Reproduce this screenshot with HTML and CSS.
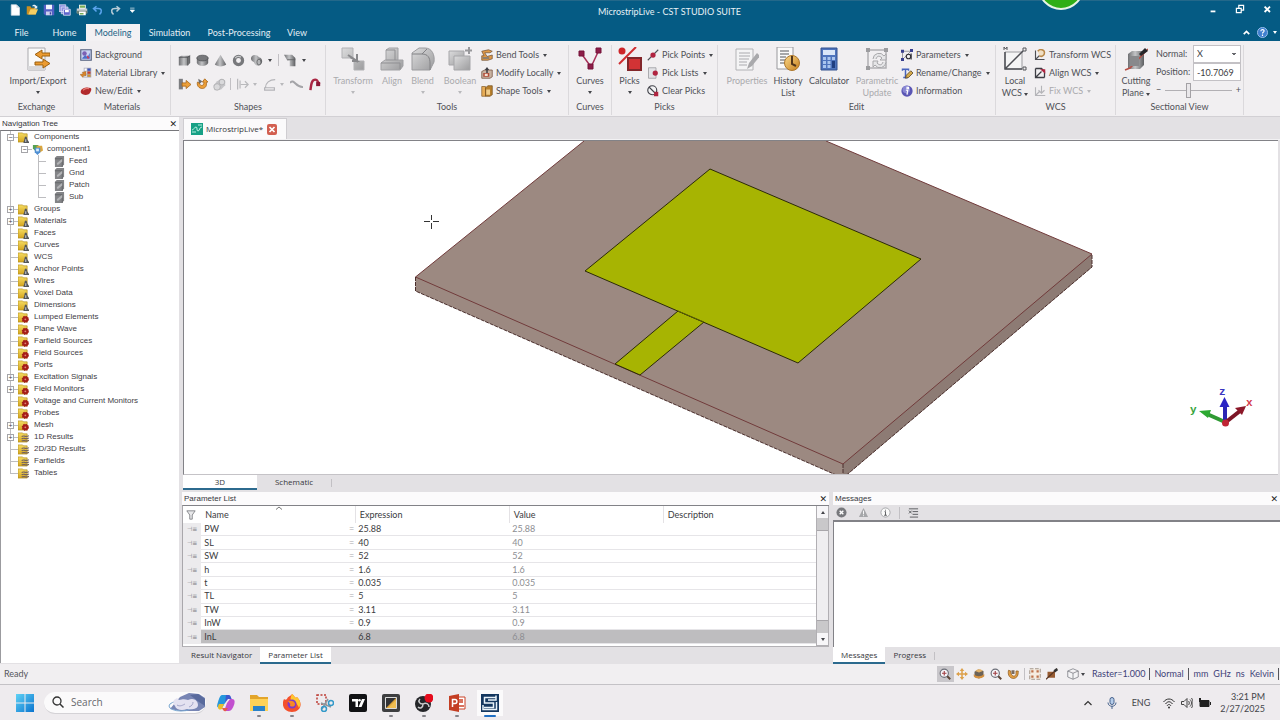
FILE: index.html
```html
<!DOCTYPE html>
<html lang="en">
<head>
<meta charset="utf-8">
<title>MicrostripLive - CST STUDIO SUITE</title>
<link rel="stylesheet" href="styles.css">
</head>
<body>
<svg class="defs" aria-hidden="true">
  <defs>
    <linearGradient id="metal" x1="0" x2="1"><stop offset="0" stop-color="#6f7073"/><stop offset=".45" stop-color="#c3c4c6"/><stop offset="1" stop-color="#5d5e61"/></linearGradient>
    <linearGradient id="pale" x1="0" y1="0" x2="1" y2="1"><stop offset="0" stop-color="#dcdcdd"/><stop offset="1" stop-color="#9c9c9e"/></linearGradient>
    <linearGradient id="win" x1="0" y1="0" x2="1" y2="1"><stop offset="0" stop-color="#5fd2f5"/><stop offset="1" stop-color="#0a74cf"/></linearGradient>
    <linearGradient id="gold" x1="0" y1="0" x2="1" y2="1"><stop offset="0" stop-color="#fbd98a"/><stop offset="1" stop-color="#c67f1d"/></linearGradient>
    <linearGradient id="fold" x1="0" y1="0" x2="0" y2="1"><stop offset="0" stop-color="#f5dc62"/><stop offset="1" stop-color="#d5a51e"/></linearGradient>
    <symbol id="i-new" viewBox="0 0 16 16"><path d="M3 1h7l4 4v10H3z" fill="#fff" stroke="#d8dfe6"/><path d="M10 1v4h4" fill="#cfd6dd"/></symbol>
    <symbol id="i-open" viewBox="0 0 16 16"><path d="M1 3h5l1 2h6v9H1z" fill="#c98f22"/><path d="M3 14l3-7h10l-3 7z" fill="#f7cf62"/><path d="M8 3c2-3 5-2 6 0l1-1v4h-4l1-2c-1-1-2-1-4-1z" fill="#e7eef5"/></symbol>
    <symbol id="i-save" viewBox="0 0 16 16"><path d="M1 1h14v14H3l-2-2z" fill="#5560c5"/><path d="M4 1h8v6H4z" fill="#f3f4fb"/><path d="M4 10h8v5H4z" fill="#cdd1ee"/><path d="M9 11h2v3H9z" fill="#39409a"/></symbol>
    <symbol id="i-saveall" viewBox="0 0 16 16"><path d="M0 1h9v9H0zM3 4h9v9H3z" fill="#8d90de" stroke="#dfe1f8"/><path d="M6 7h9v8H6z" fill="#5f65cb" stroke="#e7e8fb"/><path d="M8 8h5v3H8z" fill="#fff"/></symbol>
    <symbol id="i-print" viewBox="0 0 16 16"><path d="M4 1h9v6H4z" fill="#fff"/><path d="M1 6h14v6H1z" fill="#c8cdd1"/><path d="M1 9h14v4H1z" fill="#6b7f76"/><path d="M4 10h9v5H4z" fill="#fff"/><path d="M5 2h7v3H5zM5 12h5v2H5z" fill="#78ad58"/></symbol>
    <symbol id="i-undo" viewBox="0 0 16 16"><path d="M6 3L2 6l4 4M3 6h5c5 0 6 4 2 8" fill="none" stroke="#5aa3ec" stroke-width="2"/></symbol>
    <symbol id="i-redo" viewBox="0 0 16 16"><path d="M10 3l4 3-4 4M13 6H8c-5 0-6 4-2 8" fill="none" stroke="#b9cdd8" stroke-width="2"/></symbol>
    <symbol id="i-import" viewBox="0 0 24 24"><path d="M2 1h17v22H2z" fill="#fafafa" stroke="#a9a9ad"/><path d="M2 19h17v4H2z" fill="#d9d9dc"/><path d="M24 6v3h-8v3l-7-4.500L16 3v3zM9 15v3h8v3l7-4.500L17 12v3z" fill="#eb9b31" stroke="#9b6011"/></symbol>
    <symbol id="i-bg" viewBox="0 0 16 16"><path d="M1 1h14v14H1z" fill="#c9d3f3" stroke="#54607c" stroke-width="1.5"/><circle cx="6" cy="6" r="3" fill="#7b61b4"/><path d="M3 12l4-4 3 3 3-6v8H3z" fill="#4c6fc8"/><path d="M9 8l4 4-3 1z" fill="#d6364d"/></symbol>
    <symbol id="i-lib" viewBox="0 0 16 16"><path d="M5 1h10v13H5z" fill="#a5a7b8"/><path d="M6 2h3v3H6zM6 6h3v3H6zM6 10h3v3H6z" fill="#fff"/><path d="M10 2h4v3h-4z" fill="#3d54bb"/><path d="M10 6h4v3h-4z" fill="#c63e2b"/><path d="M10 10h4v3h-4z" fill="#d3912c"/><path d="M8 6v6l-3-1-1 3-4-4 4-1-1-2z" fill="#d9852a" stroke="#8a5a20" stroke-width=".5"/></symbol>
    <symbol id="i-mat" viewBox="0 0 16 16"><path d="M1 8c1-4 8-6 13-4 2 1 1 4-1 7-3 4-11 2-12-1z" fill="#b22a2c"/><path d="M4 7c2-2 5-3 8-2" stroke="#e67b74" stroke-width="1.5" fill="none"/></symbol>
    <symbol id="i-box" viewBox="0 0 16 16"><path d="M1 4l3-2h11v9l-3 3H1z" fill="url(#metal)"/><path d="M1 4h11v10M12 4l3-2" stroke="#4c4d50" fill="none"/></symbol>
    <symbol id="i-cyl" viewBox="0 0 16 16"><path d="M1 5v6c2 5 12 5 14 0V5z" fill="url(#metal)"/><ellipse cx="8" cy="5" rx="7" ry="3.5" fill="#77787b" stroke="#535457"/></symbol>
    <symbol id="i-cone" viewBox="0 0 16 16"><path d="M8 1l7 12c-3 3-11 3-14 0z" fill="url(#metal)"/></symbol>
    <symbol id="i-torus" viewBox="0 0 16 16"><circle cx="8" cy="8" r="5" fill="none" stroke="#77787b" stroke-width="4"/><path d="M4 5c2-3 6-2 7-1" stroke="#c8c9cb" stroke-width="1.5" fill="none"/></symbol>
    <symbol id="i-pill" viewBox="0 0 16 16"><path d="M2 3c3-3 7-2 9 1 4 1 5 5 3 8-3 4-8 2-9-2C2 9 0 6 2 3z" fill="url(#metal)"/><ellipse cx="11" cy="10" rx="2.500" ry="3.500" fill="#b4b5b7" stroke="#606164"/></symbol>
    <symbol id="i-bend" viewBox="0 0 16 16"><path d="M0 1h10l4 4v10H7V8H4z" fill="url(#metal)"/><path d="M4 7h10" stroke="#606164" fill="none"/></symbol>
    <symbol id="i-extr" viewBox="0 0 16 16"><path d="M1 1h5v13H1z" fill="#7c7d80"/><path d="M5 6h5V3l6 5-6 5v-3H5z" fill="#eda03a" stroke="#a8661a"/></symbol>
    <symbol id="i-rot" viewBox="0 0 16 16"><path d="M4 1l5 3-4 4z" fill="#6e6f72"/><path d="M3 5c-2 8 9 11 11 4V5l2 0-4-4-3 4h2c0 6-5 5-6 1z" fill="#eda03a" stroke="#a8661a"/></symbol>
    <symbol id="i-loft" viewBox="0 0 16 16"><path d="M5 4l5-3 5 2v6l-5 5-8 1-1-6z" fill="#c5c5c8"/><circle cx="5" cy="11" r="4" fill="#d9d9db" stroke="#ababae"/><circle cx="11" cy="5" r="3.500" fill="#d9d9db" stroke="#ababae"/></symbol>
    <symbol id="i-wire" viewBox="0 0 16 16"><path d="M2 1v13M5 3v10M6 8h9M11 4l4 4-4 4" fill="none" stroke="#b9b9bc" stroke-width="1.500"/></symbol>
    <symbol id="i-arc" viewBox="0 0 16 16"><path d="M3 12C3 6 8 2 15 2M2 12h12v3H2z" fill="none" stroke="#b4b4b8" stroke-width="1.500"/></symbol>
    <symbol id="i-wave" viewBox="0 0 16 16"><path d="M0 6c5-6 7 6 16 5" fill="none" stroke="#a4a4a8" stroke-width="2.500"/></symbol>
    <symbol id="i-hook" viewBox="0 0 16 16"><path d="M3 15C4 6 5 2 9 2c3 0 3 3 5 6" fill="none" stroke="#aa2643" stroke-width="3"/><path d="M10 5h5v5h-5z" fill="#8c1836"/></symbol>
    <symbol id="i-trans" viewBox="0 0 24 24"><path d="M1 1h11v10H1zM13 14h10v9H13z" fill="url(#pale)" stroke="#b1b1b4"/><path d="M7 8l9 6h-5M16 14V7M9 10l8 5" stroke="#88888b" stroke-width="2" fill="none"/></symbol>
    <symbol id="i-align" viewBox="0 0 24 24"><path d="M6 3l3-2h9v12H6zM1 16l4-3h18v6l-3 4H1z" fill="url(#pale)" stroke="#a1a1a4"/><path d="M6 3h9v10M1 16h19v6" fill="none" stroke="#8f8f92"/></symbol>
    <symbol id="i-blend" viewBox="0 0 24 24"><path d="M1 6l7-5h6c7 0 10 7 9 14l-4 8H1z" fill="url(#pale)" stroke="#9b9b9e"/><path d="M1 7h10c6 0 8 4 8 9v7M11 7l5-5" fill="none" stroke="#828285"/></symbol>
    <symbol id="i-bool" viewBox="0 0 24 24"><path d="M1 4h15v14H1z" fill="url(#pale)" stroke="#a6a6a9"/><path d="M6 9h16v14H6z" fill="url(#pale)" stroke="#a6a6a9"/><path d="M21 0v7M17 3.500h7" stroke="#98989b" stroke-width="2"/></symbol>
    <symbol id="i-bt" viewBox="0 0 16 16"><path d="M1 3l9-2 5 2-3 2H5l3 5 7-2v5l-6 2H1V9l3 0z" fill="#e09a47" stroke="#73543a"/><path d="M2 12h9" stroke="#76777a" stroke-width="2"/></symbol>
    <symbol id="i-ml" viewBox="0 0 16 16"><path d="M1 6l4-2h10v9l-3 2H1z" fill="#c9b3a2" stroke="#724f3c"/><path d="M8 0l3 4H5zM7 3h2v6H7z" fill="#3c3d43"/><path d="M3 8h8v5H3z" fill="#b04b37"/><path d="M5 9h4v3H5z" fill="#f4e2d4"/></symbol>
    <symbol id="i-st" viewBox="0 0 16 16"><path d="M1 2h5v13H1z" fill="#e7ac55" stroke="#8a6330"/><path d="M6 4l3-3h6v12l-3 2H6z" fill="#b8802c" stroke="#795221"/><path d="M7 6h5v7H7z" fill="#f0cd8c"/></symbol>
    <symbol id="i-curves" viewBox="0 0 24 24"><path d="M3 6l10 14 8-17" stroke="#a63058" stroke-width="1.500" fill="none"/><path d="M1 4h5v5H1zM18 1h5v5h-5zM10 17h5v5h-5z" fill="#8d1d49" stroke="#741339"/></symbol>
    <symbol id="i-picks" viewBox="0 0 24 24"><path d="M1 17L18 0" stroke="#cf2c30" stroke-width="2"/><circle cx="4" cy="4" r="3.500" fill="#cc2529"/><path d="M10 11h13v12H10z" fill="#d23335" stroke="#82262a" stroke-width="2"/></symbol>
    <symbol id="i-pp" viewBox="0 0 16 16"><path d="M1 15L15 1" stroke="#505158" stroke-width="1.500"/><circle cx="8" cy="8" r="3.500" fill="#b02440"/></symbol>
    <symbol id="i-pl" viewBox="0 0 16 16"><path d="M2 1h10v14H2z" fill="#e2e2e6" stroke="#95959b"/><circle cx="11" cy="8" r="3.500" fill="#b02440"/></symbol>
    <symbol id="i-cp" viewBox="0 0 16 16"><circle cx="7" cy="7" r="6" fill="#f2f2f4" stroke="#404148" stroke-width="1.500"/><path d="M3 3l10 10" stroke="#404148" stroke-width="1.500"/><path d="M10 9h5v6h-6z" fill="#b02440"/></symbol>
    <symbol id="i-prop" viewBox="0 0 24 24"><path d="M1 2h17v21H1z" fill="#f4f4f5" stroke="#b2b2b5"/><path d="M4 6h11M4 9h11M4 12h10M4 15h8M4 18h8" stroke="#aaaaae"/><path d="M12 22l2-6 8-10 3 3-8 10z" fill="#a9a9ac"/></symbol>
    <symbol id="i-hist" viewBox="0 0 24 24"><path d="M1 0h16v22H1z" fill="#fafafa" stroke="#98989c"/><path d="M4 4h9M4 7h9M4 10h6M4 13h5M4 16h5" stroke="#55565b"/><circle cx="16" cy="16" r="7.500" fill="url(#gold)" stroke="#ad772b"/><path d="M16 9v8l4 2" stroke="#51351a" stroke-width="2" fill="none"/></symbol>
    <symbol id="i-calc" viewBox="0 0 24 24"><path d="M4 1h16v22H4z" fill="#4e74bd" stroke="#34538f"/><path d="M6 3h12v5H6z" fill="#d9e6f8"/><path d="M6 10h3v3H6zM10.500 10h3v3h-3zM15 10h3v3h-3zM6 14h3v3H6zM10.500 14h3v3h-3zM15 14h3v3h-3zM6 18h3v3H6zM10.500 18h3v3h-3z" fill="#a9c5ee"/><path d="M15 14h3v7h-3z" fill="#203f80"/></symbol>
    <symbol id="i-param" viewBox="0 0 24 24"><path d="M3 3h18v18H3z" fill="none" stroke="#b0b0b3" stroke-width="1.500"/><path d="M1 1h4v4H1zM19 1h4v4h-4zM1 19h4v4H1z" fill="#9c9c9f"/><path d="M8 12a6 6 0 0111-3l2-2v6h-6l2-2c-3-3-5-2-6 1M21 15a6 6 0 01-11 3l-2 2v-6h5l-1 2c3 3 5 2 6-1" fill="#e6e6e8" stroke="#a7a7aa"/></symbol>
    <symbol id="i-pars" viewBox="0 0 16 16"><path d="M2 3h11M2 3v11M2 14L14 2" stroke="#7f8087" fill="none"/><path d="M0 1h4v4H0zM12 0h4v4h-4zM0 12h4v4H0z" fill="#39408e"/><circle cx="10" cy="10" r="3" fill="none" stroke="#2b2b30" stroke-width="1.500"/><path d="M13.500 6v8" stroke="#2b2b30" stroke-width="1.500"/></symbol>
    <symbol id="i-ren" viewBox="0 0 16 16"><path d="M1 2h10v3H9V4H7v9h2v2H3v-2h2V4H3v1H1z" fill="#4763bd"/><path d="M6 15l1-4 6-6 3 3-6 6z" fill="#d4a949" stroke="#4c3a1f"/></symbol>
    <symbol id="i-info" viewBox="0 0 16 16"><circle cx="8" cy="8" r="7.500" fill="#5a55b4"/><circle cx="7" cy="6" r="5" fill="#8987d3"/><path d="M8 3h2v2H8zM6.500 7H9l-1 5h1.500" stroke="#fff" stroke-width="1.500" fill="none"/></symbol>
    <symbol id="i-local" viewBox="0 0 24 24"><path d="M2 5h17v17H2z" fill="#f4f4f5" stroke="#9c9ca0"/><path d="M2 5v17h17M2 22L20 4" stroke="#4e4f55" stroke-width="1.500" fill="none"/><path d="M1 3V0l1.500 2L4 0v3M20 1h3v3h-3zM20 20h3v3h-3z" fill="none" stroke="#55565b"/></symbol>
    <symbol id="i-tw" viewBox="0 0 16 16"><path d="M2 2v12h12M2 14l8-8" stroke="#4e4f55" stroke-width="1.500" fill="none"/><path d="M5 3c3-4 9-2 9 2s-4 6-7 4" stroke="#b88747" stroke-width="2" fill="#f1dfc4"/></symbol>
    <symbol id="i-aw" viewBox="0 0 16 16"><path d="M2 2v12h12M2 2h8l4 4v8M2 14l8-8" stroke="#3d3e44" stroke-width="1.700" fill="none"/><path d="M8 3h7v6z" fill="#b02440"/></symbol>
    <symbol id="i-fw" viewBox="0 0 16 16"><path d="M2 3v11h13M2 14l6-6M10 1v9M6 7l4 4 4-4" stroke="#b5b5b9" stroke-width="1.500" fill="none"/></symbol>
    <symbol id="i-cut" viewBox="0 0 24 24"><path d="M4 7l4-3h12v14l-4 4H4z" fill="url(#metal)"/><path d="M1 23l5-2L24 2" stroke="#b74f45" stroke-width="1.500" fill="none"/><path d="M15 7l6-6 3 3-7 5z" fill="#26272b"/><path d="M6 9h9v10H6z" fill="#88898c"/></symbol>
    <symbol id="t-fold" viewBox="0 0 12 12"><path d="M0 1h5l1 1h4v9H0z" fill="url(#fold)" stroke="#b18a1b" stroke-width=".7"/></symbol>
    <symbol id="t-man" viewBox="0 0 12 12"><use href="#t-fold"/><path d="M6 11l1-3c0-4 3-4 3 0l2 3v1H6z" fill="#54575a"/><path d="M8 8h1v3H8z" fill="#d6dade"/></symbol>
    <symbol id="t-gear" viewBox="0 0 12 12"><use href="#t-fold"/><circle cx="8" cy="8" r="3.300" fill="#a51d18" stroke="#a51d18" stroke-width="1.300" stroke-dasharray="1.300 1.300"/><circle cx="8" cy="8" r="1" fill="#e08375"/></symbol>
    <symbol id="t-res" viewBox="0 0 12 12"><use href="#t-fold"/><path d="M4 5c2-2 4 1 8-1M4 7.500c2-2 4 1 8-1M4 10c2-2 4 1 8-1" stroke="#74635f" stroke-width="1.300" fill="none"/></symbol>
    <symbol id="t-comp" viewBox="0 0 12 12"><path d="M1 1h6v6H3L1 5z" fill="#56a152"/><path d="M5 2h6l1 5-3 2H5z" fill="#dba63e"/><path d="M3 4h6v5l-3 3-3-3z" fill="#4f8fd2"/><path d="M4.500 5h3v3h-3z" fill="#d8ebfa"/></symbol>
    <symbol id="t-cube" viewBox="0 0 12 12"><path d="M1 2l2-2h8v9l-2 3H1z" fill="#838487"/><path d="M1 3h8v9" fill="none" stroke="#636467"/><path d="M3 8l6-5v3l-5 4z" fill="#b2b3b5"/></symbol>
    <symbol id="s-pan" viewBox="0 0 16 16"><path d="M8 0l3 4H9v3h3V5l4 3-4 3V9H9v3h2l-3 4-3-4h2V9H4v2L0 8l4-3v2h3V4H5z" fill="#dca04a"/></symbol>
    <symbol id="s-rot" viewBox="0 0 16 16"><path d="M2 5l5-3 7 2v7l-6 3-6-2z" fill="#6c6256"/><path d="M1 8c3 4 10 4 14 0v3c-4 4-11 4-14 0z" fill="#d59140"/><path d="M3 4c3-3 8-3 10 0L8 6z" fill="#e2b168"/></symbol>
    <symbol id="s-zoom" viewBox="0 0 16 16"><circle cx="7" cy="7" r="5.500" fill="#f5f5f8" stroke="#6c6e78" stroke-width="1.500"/><path d="M11 11l4 4" stroke="#5c4436" stroke-width="2.500"/><path d="M7 4v6M4 7h6" stroke="#a03e43" stroke-width="1.500"/></symbol>
    <symbol id="s-turn" viewBox="0 0 16 16"><path d="M2 3c-3 13 13 15 13 3V4h-3v3c0 6-7 5-7-3z" fill="#e19d42" stroke="#8f5e24"/><path d="M6 3h4v5H6z" fill="#7b6a5c"/></symbol>
    <symbol id="s-fit" viewBox="0 0 16 16"><path d="M1 1h14v14H1z" fill="#f6ece1" stroke="#897a6c" stroke-dasharray="5 2"/><path d="M3 3h3v3H3zM10 3h3v3h-3zM3 10h3v3H3zM10 10h3v3h-3z" fill="#bd704a"/></symbol>
    <symbol id="s-cut" viewBox="0 0 16 16"><path d="M2 5h10v8H2z" fill="#975b32"/><path d="M0 15L15 1" stroke="#573422" stroke-width="1.500"/><path d="M10 3l4-3 2 3-4 3z" fill="#333"/></symbol>
    <symbol id="s-cube" viewBox="0 0 16 16"><path d="M8 1l7 3v8l-7 3-7-3V4zM1 4l7 3 7-3M8 7v8" fill="#f4f4f6" stroke="#77787f"/></symbol>
  </defs>
</svg>

<header class="titlebar">
  <nav class="quick" aria-label="Quick access">
    <button aria-label="New"><svg><use href="#i-new"/></svg></button>
    <button aria-label="Open"><svg><use href="#i-open"/></svg></button>
    <button aria-label="Save"><svg><use href="#i-save"/></svg></button>
    <button aria-label="Save all"><svg><use href="#i-saveall"/></svg></button>
    <button aria-label="Print"><svg><use href="#i-print"/></svg></button>
    <button aria-label="Undo"><svg><use href="#i-undo"/></svg></button>
    <button aria-label="Redo"><svg><use href="#i-redo"/></svg></button>
    <button aria-label="Customize"><svg viewBox="0 0 16 16"><path d="M5 5h7M5 8h7l-3.500 4z" fill="#fff" stroke="#fff"/></svg></button>
  </nav>
  <h1>MicrostripLive - CST STUDIO SUITE</h1>
  <div class="winctl">
    <button aria-label="Minimize"><svg viewBox="0 0 10 10"><path d="M3 7h4" stroke="#fff" stroke-width="1.500"/></svg></button>
    <button aria-label="Restore"><svg viewBox="0 0 10 10"><path d="M4 4V2h4v4H6M2 4.500h4V8H2z" stroke="#fff" fill="none"/></svg></button>
    <button aria-label="Close"><svg viewBox="0 0 10 10"><path d="M3 3l4.500 4.500M7.500 3L3 7.500" stroke="#fff" stroke-width="1.500"/></svg></button>
  </div>
  <span class="badge"></span>
</header>

<nav class="tabs" aria-label="Ribbon tabs">
  <button>File</button><button>Home</button><button class="on">Modeling</button><button>Simulation</button><button>Post-Processing</button><button>View</button>
  <span class="help">
    <button aria-label="Collapse ribbon"><svg viewBox="0 0 10 10"><path d="M2.500 6.500L5 4l2.500 2.500" stroke="#fff" stroke-width="1.500" fill="none"/></svg></button>
    <button aria-label="Help"><svg viewBox="0 0 12 12"><circle cx="6" cy="6" r="5.500" fill="#3f7fcf" stroke="#9fc3ee"/><path d="M4.300 4.500c0-2.500 3.700-2 3.400 0C7.500 5.500 6 5.500 6 7.200M6 8.300v1.400" stroke="#fff" stroke-width="1.300" fill="none"/></svg></button>
    <i class="caret light"></i>
  </span>
</nav>

<main class="ribbon">
  <section class="grp exchange">
    <div class="tools"><button class="big"><svg><use href="#i-import"/></svg>Import/Export<i class="caret"></i></button></div>
    <h2>Exchange</h2>
  </section>
  <section class="grp materials">
    <div class="tools"><div class="col">
      <button><svg><use href="#i-bg"/></svg>Background</button>
      <button><svg><use href="#i-lib"/></svg>Material Library<i class="caret"></i></button>
      <button><svg><use href="#i-mat"/></svg>New/Edit<i class="caret"></i></button>
    </div></div>
    <h2>Materials</h2>
  </section>
  <section class="grp shapes">
    <div class="tools stack">
      <div class="line">
        <button aria-label="Brick"><svg><use href="#i-box"/></svg></button>
        <button aria-label="Cylinder"><svg><use href="#i-cyl"/></svg></button>
        <button aria-label="Cone"><svg><use href="#i-cone"/></svg></button>
        <button aria-label="Torus"><svg><use href="#i-torus"/></svg></button>
        <button aria-label="More solids"><svg><use href="#i-pill"/></svg></button><i class="caret"></i><i class="bar"></i>
        <button aria-label="Sheet"><svg><use href="#i-bend"/></svg></button><i class="caret"></i>
      </div>
      <div class="line">
        <button aria-label="Extrude"><svg><use href="#i-extr"/></svg></button>
        <button aria-label="Rotate"><svg><use href="#i-rot"/></svg></button>
        <button aria-label="Loft" disabled><svg><use href="#i-loft"/></svg></button><i class="bar"></i>
        <button aria-label="Face" disabled><svg><use href="#i-wire"/></svg></button><i class="caret dim"></i>
        <button aria-label="Arc" disabled><svg><use href="#i-arc"/></svg></button><i class="caret dim"></i>
        <button aria-label="Wire" disabled><svg><use href="#i-wave"/></svg></button>
        <button aria-label="Bond wire"><svg><use href="#i-hook"/></svg></button>
      </div>
    </div>
    <h2>Shapes</h2>
  </section>
  <section class="grp modify">
    <div class="tools">
      <button class="big" disabled><svg><use href="#i-trans"/></svg>Transform<i class="caret"></i></button>
      <button class="big" disabled><svg><use href="#i-align"/></svg>Align</button>
      <button class="big" disabled><svg><use href="#i-blend"/></svg>Blend<i class="caret"></i></button>
      <button class="big" disabled><svg><use href="#i-bool"/></svg>Boolean<i class="caret"></i></button>
      <div class="col">
        <button><svg><use href="#i-bt"/></svg>Bend Tools<i class="caret"></i></button>
        <button><svg><use href="#i-ml"/></svg>Modify Locally<i class="caret"></i></button>
        <button><svg><use href="#i-st"/></svg>Shape Tools<i class="caret"></i></button>
      </div>
    </div>
    <h2>Tools</h2>
  </section>
  <section class="grp curves">
    <div class="tools"><button class="big"><svg><use href="#i-curves"/></svg>Curves<i class="caret"></i></button></div>
    <h2>Curves</h2>
  </section>
  <section class="grp picks">
    <div class="tools">
      <button class="big"><svg><use href="#i-picks"/></svg>Picks<i class="caret"></i></button>
      <div class="col">
        <button><svg><use href="#i-pp"/></svg>Pick Points<i class="caret"></i></button>
        <button><svg><use href="#i-pl"/></svg>Pick Lists<i class="caret"></i></button>
        <button><svg><use href="#i-cp"/></svg>Clear Picks</button>
      </div>
    </div>
    <h2>Picks</h2>
  </section>
  <section class="grp edit">
    <div class="tools">
      <button class="big" disabled><svg><use href="#i-prop"/></svg>Properties</button>
      <button class="big"><svg><use href="#i-hist"/></svg><span>History</span><span>List</span></button>
      <button class="big"><svg><use href="#i-calc"/></svg>Calculator</button>
      <button class="big" disabled><svg><use href="#i-param"/></svg><span>Parametric</span><span>Update</span></button>
      <div class="col">
        <button><svg><use href="#i-pars"/></svg>Parameters<i class="caret"></i></button>
        <button><svg><use href="#i-ren"/></svg>Rename/Change<i class="caret"></i></button>
        <button><svg><use href="#i-info"/></svg>Information</button>
      </div>
    </div>
    <h2>Edit</h2>
  </section>
  <section class="grp wcs">
    <div class="tools">
      <button class="big"><svg><use href="#i-local"/></svg><span>Local</span><span>WCS <i class="caret"></i></span></button>
      <div class="col">
        <button><svg><use href="#i-tw"/></svg>Transform WCS</button>
        <button><svg><use href="#i-aw"/></svg>Align WCS<i class="caret"></i></button>
        <button disabled><svg><use href="#i-fw"/></svg>Fix WCS<i class="caret"></i></button>
      </div>
    </div>
    <h2>WCS</h2>
  </section>
  <section class="grp section">
    <div class="tools">
      <button class="big"><svg><use href="#i-cut"/></svg><span>Cutting</span><span>Plane <i class="caret"></i></span></button>
      <div class="form">
        <label for="normal">Normal:</label>
        <select id="normal"><option>X</option><option>Y</option><option>Z</option></select>
        <label for="pos">Position:</label>
        <input id="pos" type="text" value="-10.7069">
        <div class="slide"><span>−</span><input type="range" aria-label="Cutting plane position" min="0" max="100" value="34"><span>+</span></div>
      </div>
    </div>
    <h2>Sectional View</h2>
  </section>
</main>

<div class="work">
  <aside class="navtree">
    <div class="ptitle"><span>Navigation Tree</span><button aria-label="Close navigation tree">✕</button></div>
    <ul>
      <li><button class="ex" aria-label="Collapse">−</button><svg><use href="#t-man"/></svg>Components</li>
      <li class="l1"><button class="ex" aria-label="Collapse">−</button><svg><use href="#t-comp"/></svg>component1</li>
      <li class="l2"><svg><use href="#t-cube"/></svg>Feed</li>
      <li class="l2"><svg><use href="#t-cube"/></svg>Gnd</li>
      <li class="l2"><svg><use href="#t-cube"/></svg>Patch</li>
      <li class="l2 end"><svg><use href="#t-cube"/></svg>Sub</li>
      <li><button class="ex" aria-label="Expand">+</button><svg><use href="#t-man"/></svg>Groups</li>
      <li><button class="ex" aria-label="Expand">+</button><svg><use href="#t-man"/></svg>Materials</li>
      <li><svg><use href="#t-man"/></svg>Faces</li>
      <li><svg><use href="#t-man"/></svg>Curves</li>
      <li><svg><use href="#t-man"/></svg>WCS</li>
      <li><svg><use href="#t-man"/></svg>Anchor Points</li>
      <li><svg><use href="#t-man"/></svg>Wires</li>
      <li><svg><use href="#t-man"/></svg>Voxel Data</li>
      <li><svg><use href="#t-man"/></svg>Dimensions</li>
      <li><svg><use href="#t-gear"/></svg>Lumped Elements</li>
      <li><svg><use href="#t-gear"/></svg>Plane Wave</li>
      <li><svg><use href="#t-gear"/></svg>Farfield Sources</li>
      <li><svg><use href="#t-gear"/></svg>Field Sources</li>
      <li><svg><use href="#t-gear"/></svg>Ports</li>
      <li><button class="ex" aria-label="Expand">+</button><svg><use href="#t-gear"/></svg>Excitation Signals</li>
      <li><button class="ex" aria-label="Expand">+</button><svg><use href="#t-gear"/></svg>Field Monitors</li>
      <li><svg><use href="#t-gear"/></svg>Voltage and Current Monitors</li>
      <li><svg><use href="#t-gear"/></svg>Probes</li>
      <li><button class="ex" aria-label="Expand">+</button><svg><use href="#t-gear"/></svg>Mesh</li>
      <li><button class="ex" aria-label="Expand">+</button><svg><use href="#t-res"/></svg>1D Results</li>
      <li><svg><use href="#t-res"/></svg>2D/3D Results</li>
      <li><svg><use href="#t-res"/></svg>Farfields</li>
      <li class="end"><svg><use href="#t-res"/></svg>Tables</li>
    </ul>
  </aside>

  <div class="center">
    <div class="doctabs">
      <div class="doctab">
        <svg viewBox="0 0 12 12"><path d="M0 0h12v12H0z" fill="#17a085"/><path d="M1 7c2 0 2-3 4-3s0 4 2 4 1-4 4-4M1 9h4M7 2h4" stroke="#bdf0e2" fill="none"/></svg>
        <span>MicrostripLive*</span>
        <button aria-label="Close document"><svg viewBox="0 0 10 10"><path d="M2.500 2.500l5 5M7.500 2.500l-5 5" stroke="#fff" stroke-width="1.700"/></svg></button>
      </div>
    </div>
    <div class="viewport">
      <svg viewBox="184 141 1094 333" preserveAspectRatio="xMidYMid slice" role="img" aria-label="Microstrip patch antenna model">
        <path d="M415.500 277L584 141h242l266 113v13L843 478 415.500 291z" fill="#9c8981"/>
        <path d="M1092 254v13L843 478v-14z" fill="#8d7b74"/>
        <path d="M584 141L415.500 277 843 464l249-210-266-113" fill="none" stroke="#713b3b"/>
        <path d="M415.500 277v14L843 478l249-211v-13M843 464v14" fill="none" stroke="#4a2e2c" stroke-dasharray="4 1"/>
        <path d="M678 311l-63 53 25 11 64-53z" fill="#a7b402" stroke="#2c2a08"/>
        <path d="M710 169l211 90-123 104-213-92z" fill="#a7b402" stroke="#2c2a08"/>
        <path d="M678 311l26 11" stroke="#5c6304"/>
        <path d="M424 221.500h6M433 221.500h6M431.500 215v5M431.500 223v6" stroke="#333"/>
        <path d="M1225 422l-18-8" stroke="#2f9a33" stroke-width="4"/><path d="M1199 411l12-1-3 8z" fill="#2da932"/>
        <path d="M1225 422v-16" stroke="#2b25b4" stroke-width="4"/><path d="M1224.500 397l5 10h-10z" fill="#2b25c4"/>
        <path d="M1226 422l14-11" stroke="#7c1526" stroke-width="4"/><path d="M1246 406l-4 9-7-7z" fill="#8c1728"/>
        <circle cx="1225.500" cy="423" r="3.500" fill="#bf2535"/>
        <g class="axis"><text x="1219" y="395" fill="#3a35c0">z</text><text x="1190" y="413" fill="#36a33a">y</text><text x="1246" y="406" fill="#d33a4c">x</text></g>
      </svg>
    </div>
    <div class="viewtabs"><button class="on">3D</button><button>Schematic</button><i class="bar"></i></div>

    <div class="dock">
      <section class="params">
        <div class="ptitle"><span>Parameter List</span><button aria-label="Close parameter list">✕</button></div>
        <div class="tablewrap">
          <table>
            <colgroup><col class="c-pin"><col class="c-name"><col class="c-eq"><col class="c-val"><col class="c-val"><col></colgroup>
            <thead><tr><th class="g"><svg viewBox="0 0 12 12"><path d="M1 1h10L7.500 6v5h-3V6z" fill="#e8e8ea" stroke="#77787d"/></svg></th><th colspan="2">Name<svg class="sort" viewBox="0 0 8 4"><path d="M1 3.500L4 1l3 2.500" stroke="#777" fill="none"/></svg></th><th>Expression</th><th>Value</th><th>Description</th></tr></thead>
            <tbody>
              <tr><td>⊣≡</td><td>PW</td><td>=</td><td>25.88</td><td>25.88</td><td></td></tr>
              <tr><td>⊣≡</td><td>SL</td><td>=</td><td>40</td><td>40</td><td></td></tr>
              <tr><td>⊣≡</td><td>SW</td><td>=</td><td>52</td><td>52</td><td></td></tr>
              <tr><td>⊣≡</td><td>h</td><td>=</td><td>1.6</td><td>1.6</td><td></td></tr>
              <tr><td>⊣≡</td><td>t</td><td>=</td><td>0.035</td><td>0.035</td><td></td></tr>
              <tr><td>⊣≡</td><td>TL</td><td>=</td><td>5</td><td>5</td><td></td></tr>
              <tr><td>⊣≡</td><td>TW</td><td>=</td><td>3.11</td><td>3.11</td><td></td></tr>
              <tr><td>⊣≡</td><td>InW</td><td>=</td><td>0.9</td><td>0.9</td><td></td></tr>
              <tr class="sel"><td>⊣≡</td><td>InL</td><td></td><td>6.8</td><td>6.8</td><td></td></tr>
            </tbody>
          </table>
          <div class="scroll"><button aria-label="Scroll up"><i class="caret up"></i></button><span class="track"></span><span class="thumb"></span><span class="track"></span><button aria-label="Scroll down"><i class="caret"></i></button></div>
        </div>
        <div class="ptabs"><button>Result Navigator</button><button class="on">Parameter List</button></div>
      </section>
      <section class="messages">
        <div class="ptitle"><span>Messages</span><button aria-label="Close messages">✕</button></div>
        <div class="mbar">
          <button aria-label="Errors"><svg viewBox="0 0 12 12"><circle cx="6" cy="6" r="5.500" fill="#77787c"/><path d="M4 4l4 4M8 4L4 8" stroke="#fff" stroke-width="1.500"/></svg></button>
          <button aria-label="Warnings"><svg viewBox="0 0 12 12"><path d="M6 1l5 10H1z" fill="#a5a6a9"/><path d="M6 4v4M6 9v1" stroke="#fff"/></svg></button>
          <button aria-label="Infos"><svg viewBox="0 0 12 12"><circle cx="6" cy="6" r="5" fill="#fafafa" stroke="#a3a4a7"/><path d="M6 3v1M5 5h1v4M4.500 9h3" stroke="#55565a" fill="none"/></svg></button>
          <i class="bar"></i>
          <button aria-label="Clear"><svg viewBox="0 0 12 12"><path d="M1 2h10M5 5h6M5 8h6M2 11h9M1 4l3 3M4 4L1 7" stroke="#55565a"/></svg></button>
        </div>
        <div class="mlist"></div>
        <div class="ptabs"><button class="on">Messages</button><button>Progress</button><i class="bar"></i></div>
      </section>
    </div>
  </div>
</div>

<footer class="status">
  <span class="ready">Ready</span>
  <button class="on" aria-label="Zoom"><svg><use href="#s-zoom"/></svg></button>
  <button aria-label="Pan"><svg><use href="#s-pan"/></svg></button>
  <button aria-label="Rotate"><svg><use href="#s-rot"/></svg></button>
  <button aria-label="Dynamic zoom"><svg><use href="#s-zoom"/></svg></button>
  <button aria-label="Rotate in plane"><svg><use href="#s-turn"/></svg></button>
  <i class="bar"></i>
  <button aria-label="Reset view"><svg><use href="#s-fit"/></svg></button>
  <button aria-label="Cutting plane"><svg><use href="#s-cut"/></svg></button>
  <button class="cube" aria-label="View options"><svg><use href="#s-cube"/></svg><i class="caret"></i></button>
  <span class="cell">Raster=1.000</span><span class="cell">Normal</span><span class="cell units"><span>mm</span><span>GHz</span><span>ns</span><span>Kelvin</span></span>
</footer>

<div class="taskbar">
  <button class="app" aria-label="Start"><svg viewBox="0 0 18 18"><path d="M0 0h8.500v8.500H0zM9.500 0H18v8.500H9.500zM0 9.500h8.500V18H0zM9.500 9.500H18V18H9.500z" fill="url(#win)"/></svg></button>
  <div class="search">
    <svg class="glass" viewBox="0 0 12 12"><circle cx="5" cy="5" r="4" fill="none" stroke="#333" stroke-width="1.300"/><path d="M8 8l3.500 3.500" stroke="#333" stroke-width="1.500"/></svg>
    <input type="text" placeholder="Search" aria-label="Search">
    <svg class="bear" viewBox="0 0 38 20"><path d="M12 5l9-4 10 1 6 4v9l-6 4H12L2 17z" fill="#7885b4"/><path d="M22 3l8-1 7 5v7l-6-4z" fill="#596a9d"/><ellipse cx="13" cy="14" rx="12" ry="5" fill="none" stroke="#77a6d0"/><path d="M6 8l3-2 2 2c4-1 6-1 9 0 6-3 10 1 10 5s-6 5-11 4c-5 2-11 1-12-3-2-2-2-4-1-6z" fill="#e4e2f1"/><path d="M9 13c3 2 6 0 8-1M21 15c3-1 4-3 4-5" stroke="#a3a4c8" fill="none"/></svg>
  </div>
  <button class="app" aria-label="Copilot"><svg viewBox="0 0 18 18"><path d="M5 1h6L8 9l-3 5H3c-4 0-3-3-2-6s2-7 4-7z" fill="#2497dc"/><path d="M2 10h5l-2 5c-4 2-5-2-3-5z" fill="#e9bd2f"/><path d="M9 1h3c2 0 2 4 3 4h-4L8 9z" fill="#3c59cf"/><path d="M13 5h2c3 0 3 3 2 6s-3 6-5 6H7l3-8z" fill="#c250cf"/><path d="M5 14h6l-2 3c-2 1-3-1-4-3z" fill="#e55c4a"/></svg></button>
  <button class="app" aria-label="File Explorer"><svg viewBox="0 0 18 18"><path d="M0 1h7l2 2h9v14H0z" fill="#e3a52a"/><path d="M0 5h18v12H0z" fill="#ffd257"/><path d="M3 12h12v5H3z" fill="#2a82c9"/></svg><i class="run"></i></button>
  <button class="app" aria-label="Firefox"><svg viewBox="0 0 18 18"><path d="M1 5c1 1 2 1 3 0 1-3 4-3 5-5 2 1 2 3 4 4l1-1c7 7 3 15-5 15S-2 11 1 5z" fill="#f4502c"/><path d="M9 0c2 1 2 3 4 4l1-1c4 4 4 8 2 11-2-5-4-6-8-7-1-3 0-5 1-7z" fill="#ffc62e"/><circle cx="9" cy="10" r="4.500" fill="#7e3ac8"/><path d="M5 7c3-1 7 0 7 3s-3 3-5 2c1-3-1-3-2-5z" fill="#f88925"/></svg><i class="run"></i></button>
  <button class="app" aria-label="Snipping Tool"><svg viewBox="0 0 18 18"><path d="M1 1h9v9H1z" fill="none" stroke="#bd3d35" stroke-width="1.500" stroke-dasharray="2 1.500"/><path d="M12 5L6 15M5 9l10 4" stroke="#8b969c" stroke-width="1.500"/><circle cx="15" cy="9" r="2.500" fill="none" stroke="#3299c9" stroke-width="1.500"/><circle cx="8" cy="15" r="2.500" fill="none" stroke="#3299c9" stroke-width="1.500"/></svg></button>
  <button class="app" aria-label="TradingView"><svg viewBox="0 0 18 18"><rect width="18" height="18" rx="2" fill="#111214"/><path d="M3 5h6v8H6.500V7.500H3zM13 5h3l-3.500 8h-3z" fill="#fff"/><circle cx="10.500" cy="6.300" r="1.300" fill="#fff"/></svg></button>
  <button class="app" aria-label="Media tool"><svg viewBox="0 0 18 18"><rect width="18" height="18" rx="2" fill="#3d3e40"/><path d="M3.500 3.500h11v11h-11z" fill="#d9a13b" stroke="#dadada"/><path d="M4 14L14 4H4z" fill="#313235"/><path d="M6 14h8V6z" fill="#efbd51"/></svg><i class="run"></i></button>
  <button class="app" aria-label="OBS Studio"><svg viewBox="0 0 18 18"><circle cx="8" cy="10" r="8" fill="#242528"/><path d="M8 10c-4 0-5-3-3-5M8 10c0 4-3 5-5 3M8 10c3-2 6 0 6 3" stroke="#c9cacc" stroke-width="1.500" fill="none"/><circle cx="14" cy="4" r="4.500" fill="#e50b1c"/></svg><i class="run"></i></button>
  <button class="app" aria-label="PowerPoint"><svg viewBox="0 0 18 18"><path d="M8 3h9v12H8z" fill="#fff" stroke="#cb4328"/><path d="M11 6h4M11 8h4M10 12h6" stroke="#cb4328" stroke-width="1.300"/><path d="M1 2l10-2v18L1 16z" fill="#c43e23"/><path d="M4.500 13V5.500H7c2.500 0 2.500 4 0 4H4.500" stroke="#fff" stroke-width="1.500" fill="none"/></svg><i class="run"></i></button>
  <button class="app on" aria-label="CST Studio Suite"><svg viewBox="0 0 18 18"><path d="M0 0h18v18H0z" fill="#14375f"/><path d="M15 3.500H3.500V9h9v4.500H3M15 1.500V6H7M2 11v4.500h13.500V8" stroke="#e9f3fa" stroke-width="1.500" fill="none"/></svg><i class="run"></i></button>
  <div class="tray">
    <svg viewBox="0 0 12 12"><path d="M2.500 8L6 4.500 9.500 8" stroke="#333" stroke-width="1.200" fill="none"/></svg>
    <svg viewBox="0 0 12 12"><rect x="4" y="0.500" width="4" height="7" rx="2" fill="#b6cdea" stroke="#47628c"/><path d="M2 5.500c0 5 8 5 8 0M6 9v3" stroke="#47628c" fill="none"/></svg>
    <span class="lang">ENG</span>
    <svg viewBox="0 0 12 12"><path d="M0.500 5c3-4 8-4 11 0M2.500 7c2-3 5-3 7 0M4 9c1-2 3-2 4 0" stroke="#333" fill="none"/><circle cx="6" cy="10.500" r="1" fill="#333"/></svg>
    <svg viewBox="0 0 12 12"><path d="M0.500 4.500H3L6 1.500v9L3 7.500H.5zM7.500 4c1 1 1 3 0 4M9 2.500c2 2 2 5 0 7M10.500 1c2 3 2 7 0 10" stroke="#444" fill="none"/></svg>
    <svg viewBox="0 0 12 12"><path d="M1 3.500h9v6H1z" fill="#222" stroke="#222"/><path d="M11 5h1v3h-1zM0 1h2v4H0z" fill="#222"/></svg>
    <div class="clock"><span>3:21 PM</span><span>2/27/2025</span></div>
  </div>
</div>
</body>
</html>
```
FILE: styles.css
```css
* { box-sizing: border-box; }
html, body { height: 100%; }
body {
  margin: 0;
  display: flex;
  flex-direction: column;
  overflow: hidden;
  background: #f1eff1;
  color: #505157;
  font: 9px/12px Lato, "Open Sans", sans-serif;
}
button, input, select { font: inherit; color: inherit; margin: 0; padding: 0; border: 0; background: none; }
h1, h2 { margin: 0; font: inherit; }
svg { display: block; flex: none; }
.defs { position: absolute; width: 0; height: 0; }

.caret { width: 0; height: 0; display: inline-block; flex: none; border: 2px solid transparent; border-top: 3px solid #44454a; border-bottom: 0; }
.caret.up { border-top: 0; border-bottom: 3px solid #44454a; }
.caret.light { border-top-color: #fff; }
.caret.dim, :disabled .caret { border-top-color: #b9b9bc; }
.bar { width: 1px; height: 12px; background: #c2c0c4; flex: none; }

/* Title bar and ribbon tabs */
.titlebar { position: relative; height: 24px; flex: none; display: grid; grid-template-columns: 140px 1fr 81px; background: #055b84; color: #e8f1f6; border-top: 1px solid #23688a; }
.quick { display: flex; align-items: center; height: 18px; padding-left: 7px; }
.quick button { width: 17px; display: grid; place-items: center; }
.quick svg { width: 12px; height: 12px; }
.quick button:last-child svg { width: 10px; }
.titlebar h1 { text-align: center; line-height: 22px; }
.winctl { display: grid; grid-template-columns: repeat(3, 1fr); height: 16px; }
.winctl button { display: grid; place-items: center; }
.winctl svg { width: 12px; height: 12px; }
.badge { position: absolute; right: 196px; top: -37px; width: 46px; height: 46px; border: 2px solid #e8f4e5; border-radius: 50%; background: #2fae16; clip-path: inset(36px 0 0); }
.tabs { flex: none; display: grid; grid-template-columns: 43px 43px 54px 59px 80px 36px 1fr; height: 17px; background: #055b84; color: #e4eef4; }
.tabs > button.on { background: #f3f1f3; color: #1b6487; }
.help { display: flex; justify-content: flex-end; align-items: center; gap: 5px; padding-right: 3px; }
.help svg { width: 11px; height: 11px; }

/* Ribbon */
.ribbon { flex: none; display: flex; height: 76px; padding-top: 4px; border-bottom: 1px solid #d2d0d4; background: #f1eff1; }
.grp { flex: none; display: flex; flex-direction: column; border-right: 1px solid #dbd9dc; height: 70px; }
.grp h2 { text-align: center; height: 14px; line-height: 14px; }
.tools { display: flex; height: 55px; }
.tools button { white-space: nowrap; }
.tools button:disabled { color: #aaaaad; }
.big { flex: none; display: flex; flex-direction: column; align-items: center; line-height: 12px; }
.big svg { width: 24px; height: 24px; margin: 2px 0 4px; }
.big > .caret { margin-top: 4px; }
.col { display: grid; grid-template-rows: repeat(3, 18px); padding-top: 1px; }
.col button { display: flex; align-items: center; gap: 3px; text-align: left; }
.col svg { width: 12px; height: 12px; }
.col .caret { margin-left: 1px; }
.exchange { width: 74px; }
.exchange .big { width: 100%; padding-left: 3px; }
.materials { width: 97px; }
.materials .tools { padding-left: 6px; }
.shapes { width: 155px; }
.stack { flex-direction: column; padding: 3px 0 0 7px; }
.line { display: flex; align-items: center; height: 24px; }
.line button { width: 18px; display: grid; place-items: center start; }
.line svg { width: 13px; height: 13px; }
.line .caret { margin-right: 6px; }
.line .bar { margin-right: 5px; }
.modify { width: 243px; }
.modify .tools { padding-left: 2px; }
.modify .big:nth-child(1) { width: 50px; }
.modify .big:nth-child(2) { width: 28px; }
.modify .big:nth-child(3) { width: 33px; }
.modify .big:nth-child(4) { width: 42px; }
.curves { width: 43px; }
.curves .big { width: 100%; }
.picks { width: 106px; }
.picks .big { width: 35px; }
.edit { width: 278px; }
.edit .tools { padding-left: 5px; }
.edit .big:nth-child(1) { width: 48px; }
.edit .big:nth-child(2) { width: 34px; }
.edit .big:nth-child(3) { width: 48px; }
.edit .big:nth-child(4) { width: 48px; }
.wcs { width: 120px; }
.wcs .big { width: 38px; }
.section { width: 128px; }
.section .big { width: 40px; }
.form { display: grid; grid-template-columns: 37px 48px; grid-template-rows: 18px 18px 18px; align-items: center; }
.form select, #pos { height: 18px; width: 48px; padding: 0 3px; border: 1px solid #c3c1c5; background-color: #fff; color: #3c3d42; }
.form select {
  appearance: none;
  background-image: linear-gradient(45deg, transparent 50%, #66676c 50%), linear-gradient(315deg, transparent 50%, #66676c 50%);
  background-size: 2px 2px; background-repeat: no-repeat; background-position: 38px 7px, 40px 7px;
}
.slide { grid-column: 1 / 3; display: flex; align-items: center; gap: 4px; }
.slide input { flex: 1; min-width: 0; height: 16px; appearance: none; }
.slide input::-webkit-slider-runnable-track { height: 1px; background: #b2b0b4; }
.slide input::-webkit-slider-thumb { appearance: none; width: 5px; height: 15px; margin-top: -7px; border: 1px solid #a3a1a5; background: #e9e7ea; }

/* Panels */
.work { flex: 1; min-height: 0; display: flex; background: #e3e1e4; }
.ptitle { display: flex; justify-content: space-between; align-items: center; height: 13px; background: #fcfbfc; color: #37383c; padding: 0 2px; font: 8px/12px "Liberation Sans", sans-serif; }
.ptitle button { color: #222; font: 9px/12px "DejaVu Sans", sans-serif; }
.navtree { width: 179px; flex: none; display: flex; flex-direction: column; background: #fff; margin-bottom: 1px; }
.navtree ul { flex: 1; min-height: 0; overflow: hidden; margin: 0; padding: 0; list-style: none; border-top: 1px solid #77777b; border-left: 1px solid #9b9b9f; color: #3f4045; font: 8px/12px "Liberation Sans", sans-serif; }
.navtree li {
  height: 12px; display: flex; align-items: center; gap: 5px; padding-left: 17px;
  background: linear-gradient(#bdbdc0, #bdbdc0) 9px 0 / 1px 100% no-repeat, linear-gradient(#bdbdc0, #bdbdc0) 9px 6px / 8px 1px no-repeat;
}
.navtree li.end:not(.l2) { background-size: 1px 6px, 8px 1px; }
.navtree li svg { width: 11px; height: 11px; }
.navtree li.l1 { padding-left: 31px; gap: 4px; background-position: 9px 0, 23px 6px; }
.navtree li.l2 { padding-left: 53px; gap: 4px; background: linear-gradient(#bdbdc0, #bdbdc0) 9px 0 / 1px 100% no-repeat, linear-gradient(#bdbdc0, #bdbdc0) 37px 0 / 1px 100% no-repeat, linear-gradient(#bdbdc0, #bdbdc0) 37px 6px / 8px 1px no-repeat; }
.navtree li.l2.end { background-size: 1px 100%, 1px 6px, 8px 1px; }
.ex { width: 7px; height: 7px; margin: 0 -1px 0 -11px; display: grid; place-items: center; border: 1px solid #a5a5a9; background: #fff; font-size: 7px; line-height: 5px; }
.l1 .ex { margin: 0 0 0 -11px; }

.center { flex: 1; min-width: 0; display: flex; flex-direction: column; padding: 1px 0 0 3px; }
.doctabs { height: 22px; flex: none; display: flex; margin-left: 1px; border-bottom: 1px solid #f2f1f3; }
.doctab { display: flex; align-items: center; gap: 3px; padding: 0 9px 0 7px; background: #fbfafb; border: 1px solid #cfcdd1; border-bottom: 0; color: #333439; font: 8px/12px "Open Sans", sans-serif; }
.doctab svg { width: 12px; height: 12px; }
.doctab button { background: #d25f50; border-radius: 2px; margin-left: 1px; }
.doctab button svg { width: 10px; height: 11px; }
.viewport { flex: 1; min-height: 0; margin: 0 2px 0 1px; border-top: 1px solid #828287; border-left: 1px solid #828287; border-bottom: 1px solid #c5c3c7; background: #fff; }
.viewport svg { width: 100%; height: 100%; }
.axis { font: bold 11px "Liberation Mono", monospace; }
.viewtabs { height: 15px; flex: none; display: flex; align-items: center; margin-left: 1px; color: #37383d; font: 8px/12px "Open Sans", sans-serif; }
.viewtabs button { width: 74px; height: 15px; border-bottom: 2px solid transparent; }
.viewtabs .on, .ptabs .on { background: #fff; border-bottom: 2px solid #2c6a8e; }
.viewtabs .bar, .ptabs .bar { height: 8px; }
.dock { height: 174px; flex: none; display: grid; grid-template-columns: 647fr 447fr; gap: 4px; padding-top: 2px; }
.params, .messages { min-width: 0; display: flex; flex-direction: column; }
.tablewrap { flex: 1; min-height: 0; display: flex; border-top: 1px solid #828287; border-bottom: 1px solid #b3b1b5; border-left: 1px solid #a9a7ab; background: #fff; padding-bottom: 2px; }
table { flex: 1; height: 100%; border-collapse: collapse; table-layout: fixed; color: #3a3b40; }
.c-pin { width: 17px; }
.c-name { width: 144px; }
.c-eq { width: 10px; }
.c-val { width: 154px; }
th { height: 17px; padding: 0 0 0 4px; text-align: left; font-weight: 400; border-right: 1px solid #e4e2e5; position: relative; }
th.g { padding: 0 3px; border: 0; }
th.g svg { width: 10px; height: 10px; }
th:last-child { border: 0; }
.sort { position: absolute; left: 74px; top: 0; width: 8px; height: 4px; }
td { padding: 0 0 0 3px; line-height: 12px; border-bottom: 1px solid #e6e5e8; }
td:first-child { background: #ecebed; color: #77787d; padding: 0 4px; border: 0; font: 6px/12px "DejaVu Sans", sans-serif; }
td:nth-child(3) { color: #aaaaae; text-align: right; padding: 0 1px 0 0; }
td:nth-child(5) { color: #8d8e92; }
.sel td:not(:first-child) { background: #bebdbf; }
.scroll { width: 13px; display: flex; flex-direction: column; border: 1px solid #b1afb3; border-top: 0; background: #c9c8ca; margin-bottom: -2px; }
.scroll button { height: 12px; display: grid; place-items: center; background: #f7f6f8; }
.track { height: 12px; }
.thumb { flex: 1; background: #efeef0; border: solid #a8a6aa; border-width: 1px 0; }
.ptabs { height: 17px; flex: none; display: flex; align-items: center; color: #37383d; font: 8px/12px "Open Sans", sans-serif; }
.params .ptabs { padding-left: 1px; }
.ptabs button { height: 17px; padding: 0 8px; border-bottom: 2px solid transparent; }
.mbar { height: 15px; display: flex; align-items: center; gap: 11px; padding-left: 3px; }
.mbar svg { width: 11px; height: 11px; }
.mbar .bar { margin: 0 -3px; }
.mlist { flex: 1; background: #fff; border-top: 2px solid #828287; border-left: 1px solid #828287; }

/* Status bar */
.status { flex: none; height: 21px; display: flex; align-items: center; border-bottom: 1px solid #c4c2c6; background: #f1eff1; color: #3e3f78; }
.ready { margin: 0 auto 0 4px; color: #55565c; }
.status button { width: 17px; height: 16px; display: flex; align-items: center; justify-content: center; }
.status button.on { background: #c9c7cb; }
.status svg { width: 12px; height: 12px; }
.status .bar { margin: 0 2px; }
.status .cube { width: 24px; gap: 2px; margin-left: 3px; }
.cell { padding: 0 4px; border-right: 1px solid #55565c; }
.units { display: flex; gap: 5px; padding-left: 5px; margin-right: 1px; }

/* Taskbar */
.taskbar { flex: none; height: 35px; display: flex; align-items: center; padding-left: 8px; background: #eeebee; }
.app { position: relative; width: 33px; height: 33px; display: grid; place-items: center; }
.app svg { width: 18px; height: 18px; }
.app.on svg { outline: 4px solid #fbfafb; }
.run { position: absolute; left: 15px; bottom: 2px; width: 4px; height: 2px; border-radius: 1px; background: #85848a; }
.on .run { left: 11px; width: 12px; background: #1f6fc4; }
.search { display: flex; align-items: center; width: 162px; height: 22px; margin: 0 3px; padding: 0 0 0 8px; border-radius: 11px; background: #fbfafb; border-bottom: 1px solid #d4d2d6; }
.search .glass { width: 12px; height: 12px; }
.search input { flex: 1; min-width: 0; padding-left: 7px; font: 10px/14px "Open Sans", sans-serif; }
.search input::placeholder { color: #66676c; }
.bear { width: 38px; height: 20px; }
.tray { flex: 1; display: flex; align-items: center; justify-content: flex-end; gap: 6px; padding-right: 15px; color: #44454a; }
.tray svg { width: 12px; height: 12px; }
.tray svg:first-child { margin-right: 6px; }
.lang { margin: 0 7px 0 8px; }
.clock { display: flex; flex-direction: column; align-items: flex-end; margin-left: 3px; }
```
